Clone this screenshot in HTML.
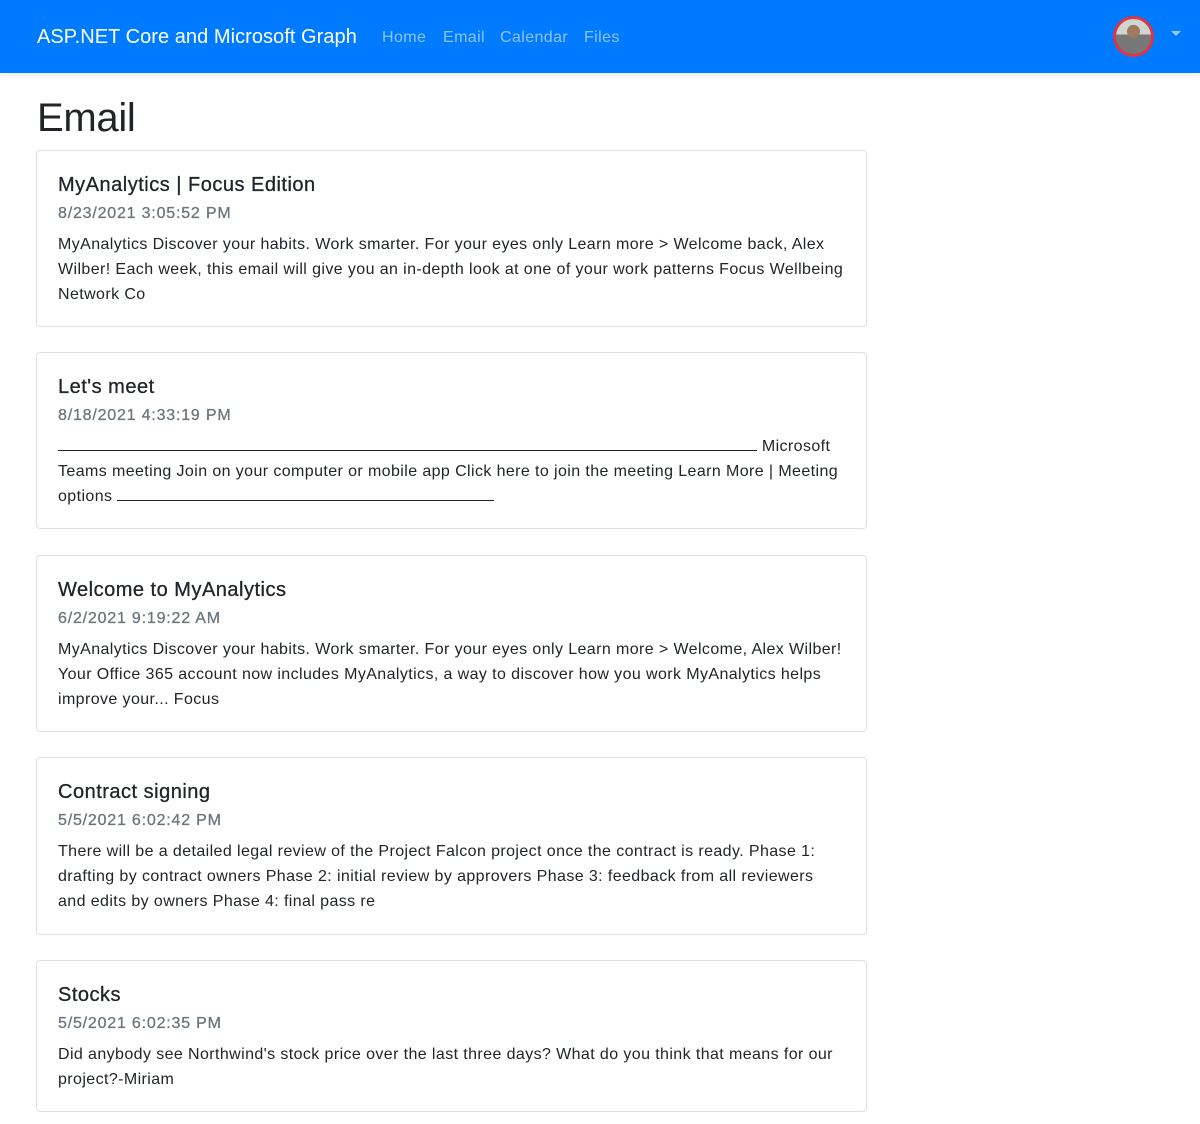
<!DOCTYPE html>
<html><head><meta charset="utf-8"><style>
*{box-sizing:border-box;margin:0;padding:0}
body{width:1200px;height:1124px;overflow:hidden;background:#fff;font-family:"Liberation Sans",sans-serif;color:#212529}
.nav{height:73px;background:#007bff;position:relative;box-shadow:0 2px 4px rgba(0,0,0,.08)}
.brand{position:absolute;left:37px;top:25px;font-size:20px;color:#fff;line-height:24px;letter-spacing:0.05px}
.link{position:absolute;top:28px;font-size:16px;line-height:19px;color:rgba(255,255,255,.55);letter-spacing:0.4px}
.av{position:absolute;left:1113px;top:16px;width:41px;height:41px;border-radius:50%;border:3px solid #dc3545;background:radial-gradient(circle at 50% 35%,#a07a60 0 22%,transparent 23%),linear-gradient(#cfd5d0 0 45%,#777 45% 100%)}
.caret{position:absolute;left:1171px;top:31px;width:0;height:0;border-left:5px solid transparent;border-right:5px solid transparent;border-top:5px solid rgba(255,255,255,.6)}
h1{position:absolute;left:37px;top:94px;font-size:40px;font-weight:500;line-height:48px;letter-spacing:-0.3px}
.card{position:absolute;left:36px;width:831px;border:1px solid rgba(0,0,0,.125);border-radius:4px;padding:22px 21px 20px}
.t{font-size:20px;line-height:24px;letter-spacing:0.5px;-webkit-text-stroke:0.3px #212529}
.d{font-size:16px;line-height:19px;color:#6c757d;margin-top:7px;letter-spacing:0.8px;-webkit-text-stroke:0.3px #6c757d}
.x{font-size:16px;line-height:25px;margin-top:9px;white-space:nowrap;letter-spacing:0.4px}
.u{display:inline-block;border-bottom:1px solid #212529;height:16px;vertical-align:baseline}
</style></head><body>
<div class="nav"><div class="brand">ASP.NET Core and Microsoft Graph</div>
<div class="link" style="left:382px">Home</div><div class="link" style="left:443px">Email</div><div class="link" style="left:500px">Calendar</div><div class="link" style="left:584px">Files</div>
<div class="av"></div><div class="caret"></div></div>
<h1>Email</h1>
<div class="card" style="top:150px;height:177px"><div class="t">MyAnalytics | Focus Edition</div><div class="d">8/23/2021 3:05:52 PM</div><div class="x">MyAnalytics Discover your habits. Work smarter. For your eyes only Learn more &gt; Welcome back, Alex<br>Wilber! Each week, this email will give you an in-depth look at one of your work patterns Focus Wellbeing<br>Network Co</div></div>
<div class="card" style="top:352px;height:177px"><div class="t">Let's meet</div><div class="d">8/18/2021 4:33:19 PM</div><div class="x"><span class="u" style="width:699px"></span> Microsoft<br>Teams meeting Join on your computer or mobile app Click here to join the meeting Learn More | Meeting<br>options <span class="u" style="width:377px"></span></div></div>
<div class="card" style="top:555px;height:177px"><div class="t">Welcome to MyAnalytics</div><div class="d">6/2/2021 9:19:22 AM</div><div class="x">MyAnalytics Discover your habits. Work smarter. For your eyes only Learn more &gt; Welcome, Alex Wilber!<br>Your Office 365 account now includes MyAnalytics, a way to discover how you work MyAnalytics helps<br>improve your... Focus</div></div>
<div class="card" style="top:757px;height:178px"><div class="t">Contract signing</div><div class="d">5/5/2021 6:02:42 PM</div><div class="x">There will be a detailed legal review of the Project Falcon project once the contract is ready. Phase 1:<br>drafting by contract owners Phase 2: initial review by approvers Phase 3: feedback from all reviewers<br>and edits by owners Phase 4: final pass re</div></div>
<div class="card" style="top:960px;height:152px"><div class="t">Stocks</div><div class="d">5/5/2021 6:02:35 PM</div><div class="x">Did anybody see Northwind's stock price over the last three days? What do you think that means for our<br>project?-Miriam</div></div>
</body></html>
